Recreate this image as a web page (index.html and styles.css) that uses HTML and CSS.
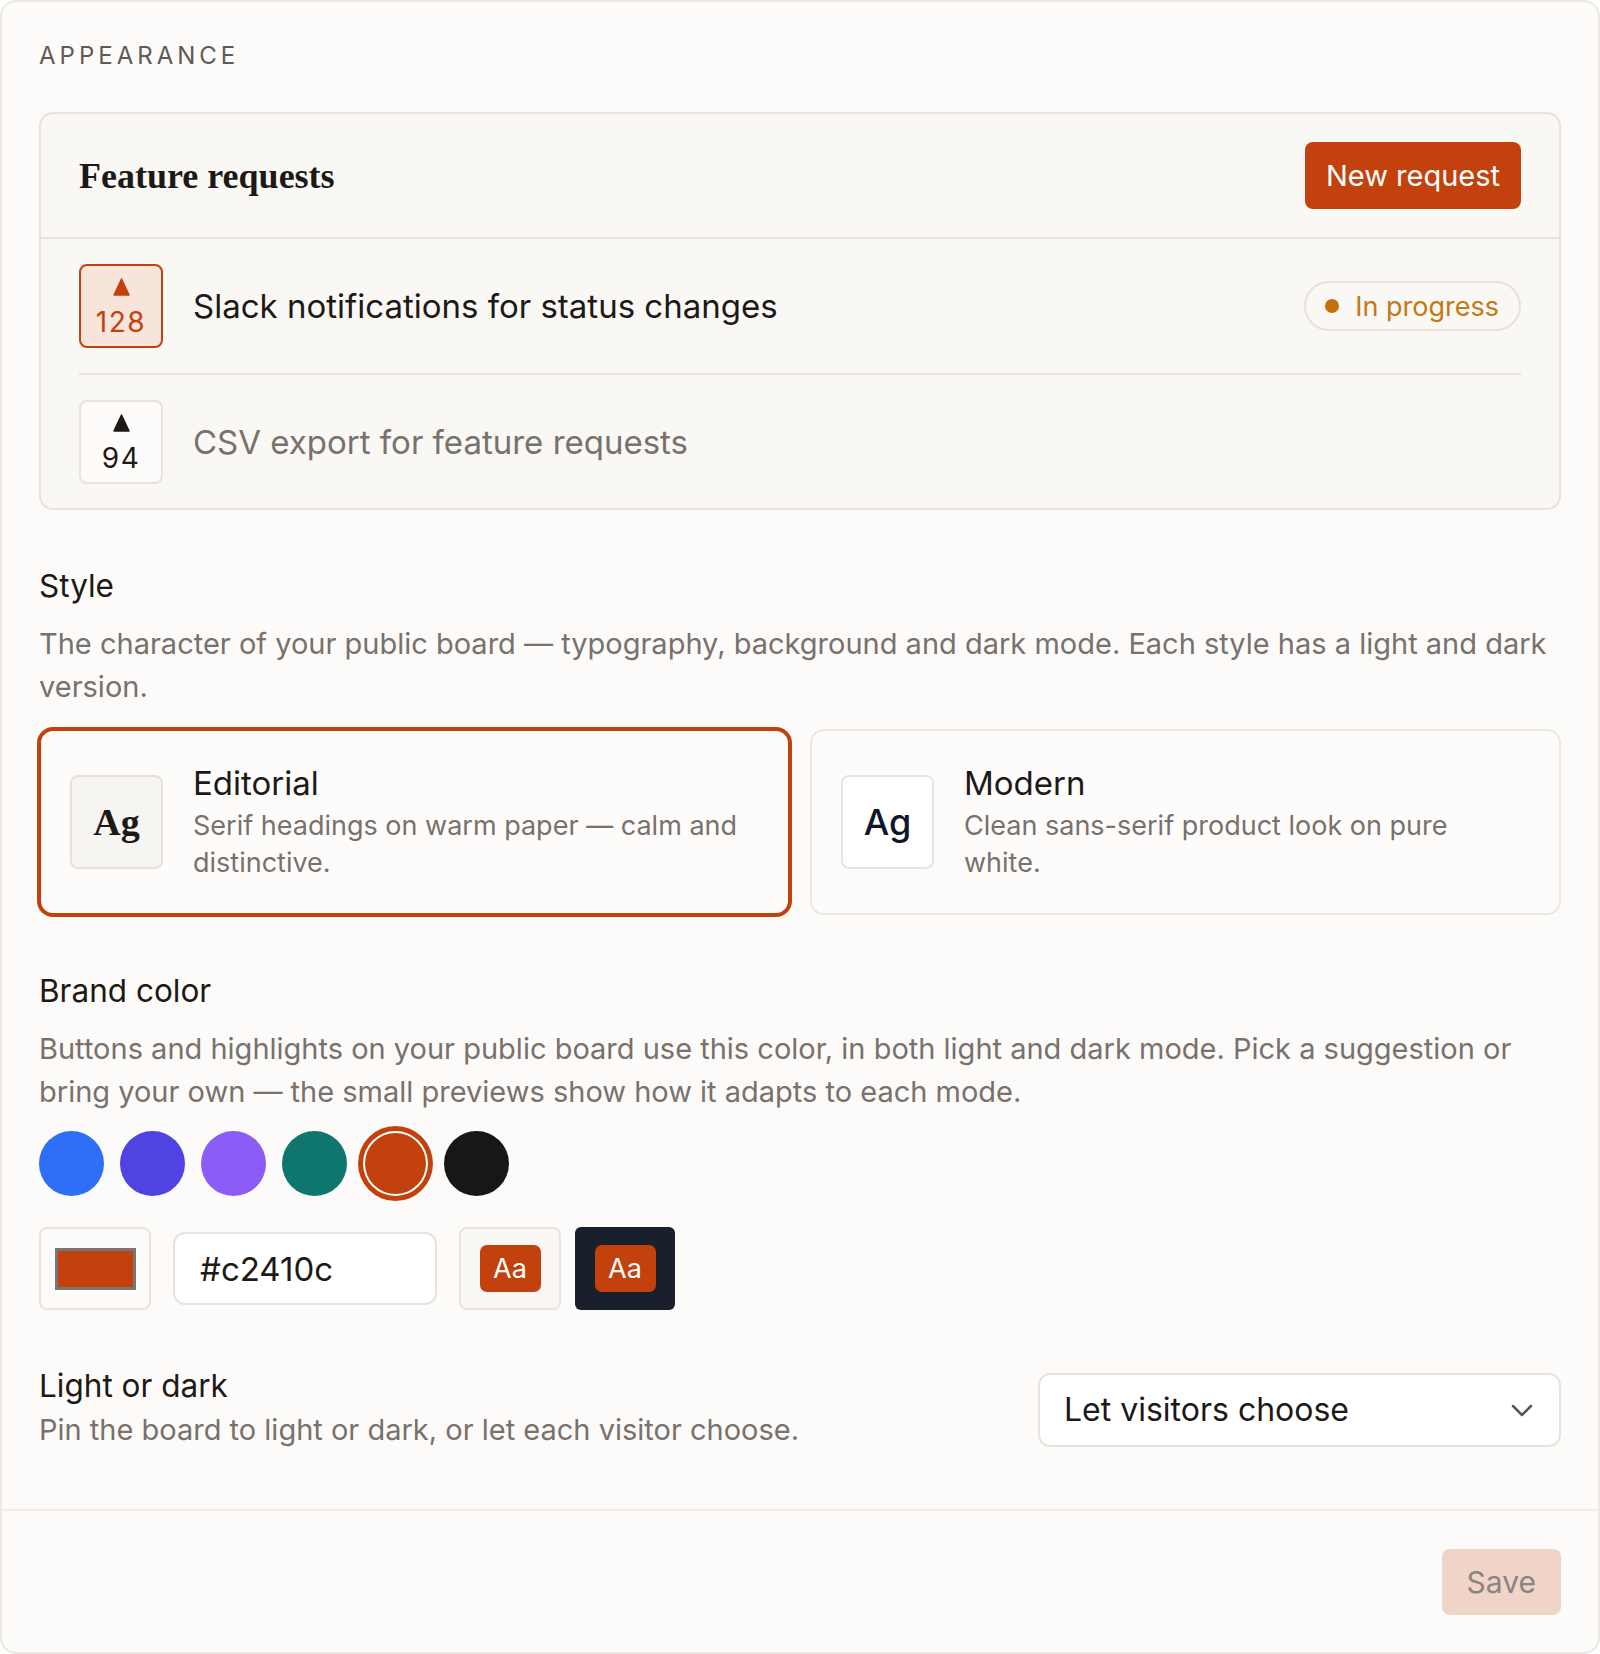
FILE: index.html
```html
<!DOCTYPE html>
<html lang="en">
  <head>
    <meta charset="UTF-8" />
    <title>Appearance</title>
    <link rel="stylesheet" href="styles.css">
  </head>
  <body>
    <div class="page">
      <div class="content">
        <div class="eyebrow">Appearance</div>

        <!-- Preview of the public board -->
        <div class="board">
          <div class="board-head">
            <h1 class="board-title">Feature requests</h1>
            <button class="btn-primary">New request</button>
          </div>
          <div class="board-list">
            <div class="request">
              <div class="vote active">
                <svg class="vote-arrow" width="17" height="18" viewBox="0 0 17 18"><polygon points="1,17 8.5,1 16,17" /></svg>
                <span class="vote-count">128</span>
              </div>
              <div class="request-title">Slack notifications for status changes</div>
              <div class="status"><span class="status-dot"></span>In progress</div>
            </div>
            <div class="request">
              <div class="vote">
                <svg class="vote-arrow" width="17" height="18" viewBox="0 0 17 18"><polygon points="1,17 8.5,1 16,17" /></svg>
                <span class="vote-count">94</span>
              </div>
              <div class="request-title muted">CSV export for feature requests</div>
            </div>
          </div>
        </div>

        <!-- Style -->
        <section class="field">
          <h2>Style</h2>
          <p class="hint">The character of your public board — typography, background and dark mode. Each style has a light and dark version.</p>
          <div class="styles">
            <div class="style-card selected">
              <div class="ag ag-serif">Ag</div>
              <div class="style-text">
                <div class="style-name">Editorial</div>
                <div class="style-desc">Serif headings on warm paper — calm and distinctive.</div>
              </div>
            </div>
            <div class="style-card">
              <div class="ag ag-sans">Ag</div>
              <div class="style-text">
                <div class="style-name">Modern</div>
                <div class="style-desc">Clean sans-serif product look on pure white.</div>
              </div>
            </div>
          </div>
        </section>

        <!-- Brand color -->
        <section class="field">
          <h2>Brand color</h2>
          <p class="hint">Buttons and highlights on your public board use this color, in both light and dark mode. Pick a suggestion or bring your own — the small previews show how it adapts to each mode.</p>
          <div class="swatches">
            <span class="swatch" style="background:#2f6ff6"></span>
            <span class="swatch" style="background:#4f44e2"></span>
            <span class="swatch" style="background:#8b5cf6"></span>
            <span class="swatch" style="background:#0f766e"></span>
            <span class="swatch selected" style="background:#c2410c"></span>
            <span class="swatch" style="background:#171717"></span>
          </div>
          <div class="color-row">
            <div class="picker"><span class="picker-fill"></span></div>
            <input class="hex" type="text" value="#c2410c" />
            <div class="previews">
              <div class="preview light"><span class="chip">Aa</span></div>
              <div class="preview dark"><span class="chip">Aa</span></div>
            </div>
          </div>
        </section>

        <!-- Light or dark -->
        <section class="field field-row">
          <div>
            <h2>Light or dark</h2>
            <p class="hint tight">Pin the board to light or dark, or let each visitor choose.</p>
          </div>
          <div class="select-wrap">
            <select class="select">
              <option>Let visitors choose</option>
              <option>Always light</option>
              <option>Always dark</option>
            </select>
            <svg class="chevron" width="22" height="13" viewBox="0 0 22 13"><polyline points="2,2 11,11 20,2" /></svg>
          </div>
        </section>
      </div>

      <div class="footer">
        <button class="btn-save">Save</button>
      </div>
    </div>
  </body>
</html>
```

FILE: styles.css
```css
:root {
  --accent: #c2410c;
  --text: #1c1917;
  --muted: #78716c;
  --line: #e8e3dc;
  --paper: #faf8f5;
}

* {
  margin: 0;
  padding: 0;
  box-sizing: border-box;
}

body {
  background: #ffffff;
  color: var(--text);
  font-family: Inter, "Noto Sans", sans-serif;
}

.page {
  height: 1654px;
  display: flex;
  flex-direction: column;
  background: #fcfbf9;
  border: 2px solid #ece8e3;
  border-radius: 16px;
}

.content {
  padding: 39px 37px 58px;
}

.eyebrow {
  font-size: 24px;
  line-height: 29px;
  letter-spacing: 4px;
  text-transform: uppercase;
  color: #5f5a55;
}

/* board preview */
.board {
  margin-top: 42px;
  background: var(--paper);
  border: 2px solid var(--line);
  border-radius: 14px;
}

.board-head {
  display: flex;
  justify-content: space-between;
  align-items: center;
  padding: 28px 38px;
  border-bottom: 2px solid var(--line);
}

.board-title {
  font-family: "Liberation Serif", "DejaVu Serif", serif;
  font-weight: 700;
  font-size: 36px;
}

.btn-primary {
  height: 67px;
  padding: 0 21px;
  background: var(--accent);
  color: #fff;
  border: none;
  border-radius: 8px;
  font-family: Inter, sans-serif;
  font-size: 29px;
}

.board-list {
  padding: 0 38px;
}

.request {
  display: flex;
  align-items: center;
  gap: 30px;
  padding: 25px 0;
  border-bottom: 2px solid var(--line);
}

.request:last-child {
  border-bottom: none;
  padding-bottom: 24px;
}

.vote {
  flex: 0 0 84px;
  height: 84px;
  display: flex;
  flex-direction: column;
  align-items: center;
  justify-content: center;
  gap: 12px;
  padding-top: 2px;
  border: 2px solid var(--line);
  border-radius: 8px;
  background: #fdfcfa;
  color: var(--text);
}

.vote-arrow polygon {
  fill: currentColor;
  stroke: currentColor;
  stroke-width: 1.5;
  stroke-linejoin: round;
}

.vote-count {
  font-size: 28px;
  line-height: 28px;
  letter-spacing: 1.5px;
}

.vote.active {
  border-color: var(--accent);
  background: #f7e5dc;
  color: var(--accent);
}

.request-title {
  font-size: 33px;
}

.request-title.muted {
  color: var(--muted);
}

.status {
  margin-left: auto;
  height: 50px;
  display: flex;
  align-items: center;
  gap: 16px;
  padding: 0 20px 0 19px;
  border: 2px solid #e7e1d9;
  border-radius: 25px;
  font-size: 27px;
  color: #c27a16;
}

.status-dot {
  width: 14px;
  height: 14px;
  border-radius: 50%;
  background: #c46f0b;
}

/* fields */
.field {
  margin-top: 58px;
}

h2 {
  font-size: 31.5px;
  line-height: 36px;
  font-weight: 400;
}

.hint {
  margin-top: 18px;
  font-size: 29px;
  line-height: 43px;
  color: var(--muted);
}

.hint.tight {
  margin-top: 4px;
}

.styles {
  margin-top: 21px;
  display: grid;
  grid-template-columns: 1fr 1fr;
  gap: 20px;
}

.style-card {
  display: flex;
  align-items: center;
  gap: 30px;
  padding: 32px 29px;
  background: #fdfcfb;
  border: 2px solid #ebe7e1;
  border-radius: 14px;
}

.style-card.selected {
  border-color: var(--accent);
  box-shadow: 0 0 0 2px var(--accent);
}

.ag {
  flex: 0 0 93px;
  height: 94px;
  display: flex;
  align-items: center;
  justify-content: center;
  border: 2px solid #e6e1da;
  border-radius: 8px;
}

.ag-serif {
  background: #f7f5f1;
  font-family: "Liberation Serif", serif;
  font-weight: 700;
  font-size: 38px;
  color: var(--text);
}

.ag-sans {
  background: #ffffff;
  border-color: #e3e5ea;
  font-weight: 500;
  font-size: 36px;
  color: #0f172a;
}

.style-name {
  font-size: 33px;
  line-height: 40px;
  font-weight: 400;
}

.style-desc {
  margin-top: 4px;
  font-size: 27px;
  line-height: 37px;
  color: var(--muted);
}

.swatches {
  margin-top: 18px;
  display: flex;
  gap: 16px;
}

.swatch {
  width: 65px;
  height: 65px;
  border-radius: 50%;
}

.swatch.selected {
  box-shadow: inset 0 0 0 2px #fff, 0 0 0 5px var(--accent);
}

.color-row {
  margin-top: 31px;
  display: flex;
  align-items: center;
  gap: 22px;
}

.picker {
  width: 112px;
  height: 83px;
  display: flex;
  align-items: center;
  justify-content: center;
  border: 2px solid var(--line);
  border-radius: 8px;
  background: #fdfcfa;
}

.picker-fill {
  width: 81px;
  height: 42px;
  background: var(--accent);
  border: 3px solid #767676;
}

.hex {
  width: 264px;
  height: 73px;
  padding: 0 25px;
  border: 2px solid var(--line);
  border-radius: 12px;
  background: #fff;
  font-family: Inter, sans-serif;
  font-size: 33px;
  color: var(--text);
  outline: none;
}

.previews {
  display: flex;
  gap: 14px;
}

.preview {
  width: 102px;
  height: 83px;
  display: flex;
  align-items: center;
  justify-content: center;
  border-radius: 8px;
}

.preview.light {
  background: var(--paper);
  border: 2px solid var(--line);
}

.preview.dark {
  width: 100px;
  background: #1a1f2c;
  border-radius: 6px;
}

.chip {
  width: 61px;
  height: 47px;
  display: flex;
  align-items: center;
  justify-content: center;
  background: var(--accent);
  border-radius: 7px;
  color: #fff;
  font-size: 27px;
}

.field-row {
  display: flex;
  justify-content: space-between;
  align-items: center;
}

.select-wrap {
  position: relative;
  width: 523px;
  height: 74px;
}

.select {
  width: 100%;
  height: 100%;
  appearance: none;
  padding: 0 24px;
  border: 2px solid var(--line);
  border-radius: 12px;
  background: #fff;
  font-family: Inter, sans-serif;
  font-size: 32px;
  color: var(--text);
}

.chevron {
  position: absolute;
  right: 28px;
  top: 31px;
}

.chevron polyline {
  fill: none;
  stroke: #5b5651;
  stroke-width: 2.5;
  stroke-linecap: round;
  stroke-linejoin: round;
}

.footer {
  margin-top: auto;
  display: flex;
  justify-content: flex-end;
  padding: 38px 37px 37px;
  border-top: 2px solid #f0ece7;
}

.btn-save {
  height: 66px;
  padding: 0 25px;
  border: none;
  border-radius: 8px;
  background: #f0d4c8;
  color: #8b8580;
  font-family: Inter, sans-serif;
  font-size: 30px;
}
```
